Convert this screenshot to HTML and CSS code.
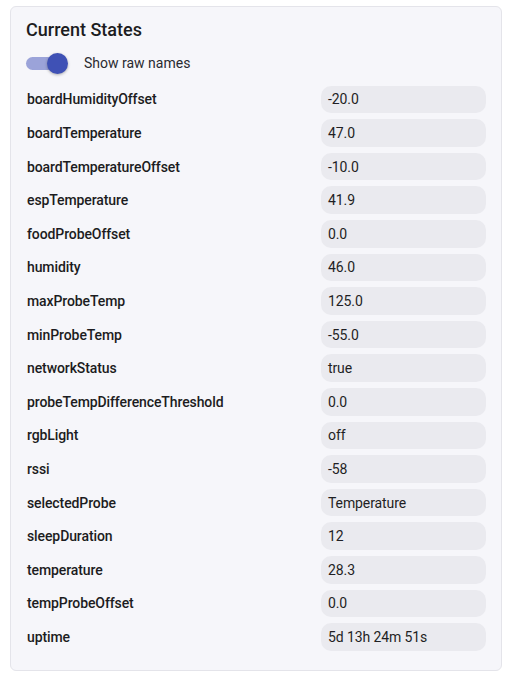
FILE: index.html
```html
<!DOCTYPE html>
<html>
<head>
<meta charset="utf-8">
<link rel="stylesheet" href="styles.css">
</head>
<body>
<div class="card">
  <h2 class="title">Current States</h2>
  <div class="toggle-row">
    <span class="switch"><span class="track"></span><span class="thumb"></span></span>
    <span class="toggle-label">Show raw names</span>
  </div>
  <div class="states">
    <div class="name">boardHumidityOffset</div><div class="value">-20.0</div>
    <div class="name">boardTemperature</div><div class="value">47.0</div>
    <div class="name">boardTemperatureOffset</div><div class="value">-10.0</div>
    <div class="name">espTemperature</div><div class="value">41.9</div>
    <div class="name">foodProbeOffset</div><div class="value">0.0</div>
    <div class="name">humidity</div><div class="value">46.0</div>
    <div class="name">maxProbeTemp</div><div class="value">125.0</div>
    <div class="name">minProbeTemp</div><div class="value">-55.0</div>
    <div class="name">networkStatus</div><div class="value">true</div>
    <div class="name">probeTempDifferenceThreshold</div><div class="value">0.0</div>
    <div class="name">rgbLight</div><div class="value">off</div>
    <div class="name">rssi</div><div class="value">-58</div>
    <div class="name">selectedProbe</div><div class="value">Temperature</div>
    <div class="name">sleepDuration</div><div class="value">12</div>
    <div class="name">temperature</div><div class="value">28.3</div>
    <div class="name">tempProbeOffset</div><div class="value">0.0</div>
    <div class="name">uptime</div><div class="value">5d 13h 24m 51s</div>
  </div>
</div>
</body>
</html>
```

FILE: styles.css
```css
html, body {
  margin: 0;
  background: #ffffff;
}
body {
  padding: 6px 5px 8px 10px;
  font-family: Roboto, "Liberation Sans", sans-serif;
  color: #1f1f24;
}
.card {
  box-sizing: border-box;
  width: 492px;
  height: 665px;
  background: #f6f6fa;
  border: 1px solid #e4e4ea;
  border-radius: 6px;
  padding: 11px 15px 16px 15px;
}
.title {
  margin: 0;
  font-size: 18px;
  font-weight: 500;
  line-height: 24px;
  color: #1c1c21;
}
.toggle-row {
  display: flex;
  align-items: center;
  height: 24px;
  margin-top: 9px;
}
.switch {
  position: relative;
  width: 42px;
  height: 24px;
  flex: none;
}
.track {
  position: absolute;
  left: 0;
  top: 6px;
  width: 36px;
  height: 13px;
  border-radius: 7px;
  background: #9ba3d9;
}
.thumb {
  position: absolute;
  left: 21px;
  top: 2px;
  width: 21px;
  height: 21px;
  border-radius: 50%;
  background: #3f51b5;
  box-shadow: 0 1px 3px rgba(0,0,0,0.3);
}
.toggle-label {
  margin-left: 16px;
  font-size: 14px;
  color: #2a2a30;
}
.states {
  display: grid;
  grid-template-columns: 1fr 165px;
  grid-auto-rows: 27.6px;
  row-gap: 6px;
  margin-top: 10.6px;
  align-items: center;
}
.name {
  font-size: 14px;
  font-weight: 500;
  letter-spacing: -0.1px;
  padding-left: 1px;
  color: #1c1c21;
}
.value {
  height: 100%;
  box-sizing: border-box;
  display: flex;
  align-items: center;
  padding-left: 7px;
  background: #eaeaef;
  border-radius: 10px;
  font-size: 14px;
  letter-spacing: -0.1px;
  color: #1f1f24;
}
```
